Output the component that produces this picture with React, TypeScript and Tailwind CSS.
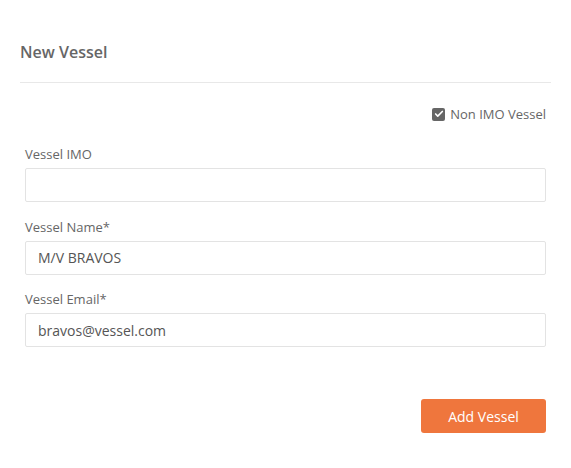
import { Check } from 'lucide-react';

function Field({ label, value }: { label: string; value?: string }) {
  return (
    <div className="flex flex-col">
      <label className="text-[13px] leading-[18px] text-[#666] mb-[5px]">{label}</label>
      <input
        readOnly
        value={value ?? ''}
        className="h-[34px] w-full border border-[#e3e3e3] rounded-[2px] px-[12px] text-[14px] text-[#555] outline-none bg-white"
      />
    </div>
  );
}

export default function App() {
  return (
    <div className="min-h-screen bg-white px-[20px] pt-[40px]" style={{ fontFamily: '"Open Sans", sans-serif' }}>
      <div className="border-b border-[#e8e8e8] pb-[18px]">
        <h1 className="text-[16px] leading-[24px] font-semibold text-[#666]">New Vessel</h1>
      </div>

      <div className="px-[5px]">
        <div className="flex justify-end items-center gap-[5px] mt-[22px]">
          <span className="w-[13px] h-[13px] rounded-[2px] bg-[#666] flex items-center justify-center">
            <Check size={10} strokeWidth={4} className="text-white" />
          </span>
          <span className="text-[13px] leading-[18px] text-[#666]">Non IMO Vessel</span>
        </div>

        <div className="flex flex-col gap-[15.5px] mt-[22px]">
          <Field label="Vessel IMO" />
          <Field label="Vessel Name*" value="M/V BRAVOS" />
          <Field label="Vessel Email*" value="bravos@vessel.com" />
        </div>

        <div className="flex justify-end mt-[52px]">
          <button className="w-[125px] h-[34px] rounded-[3px] bg-[#ef763d] text-white text-[14px]">
            Add Vessel
          </button>
        </div>
      </div>
    </div>
  );
}
